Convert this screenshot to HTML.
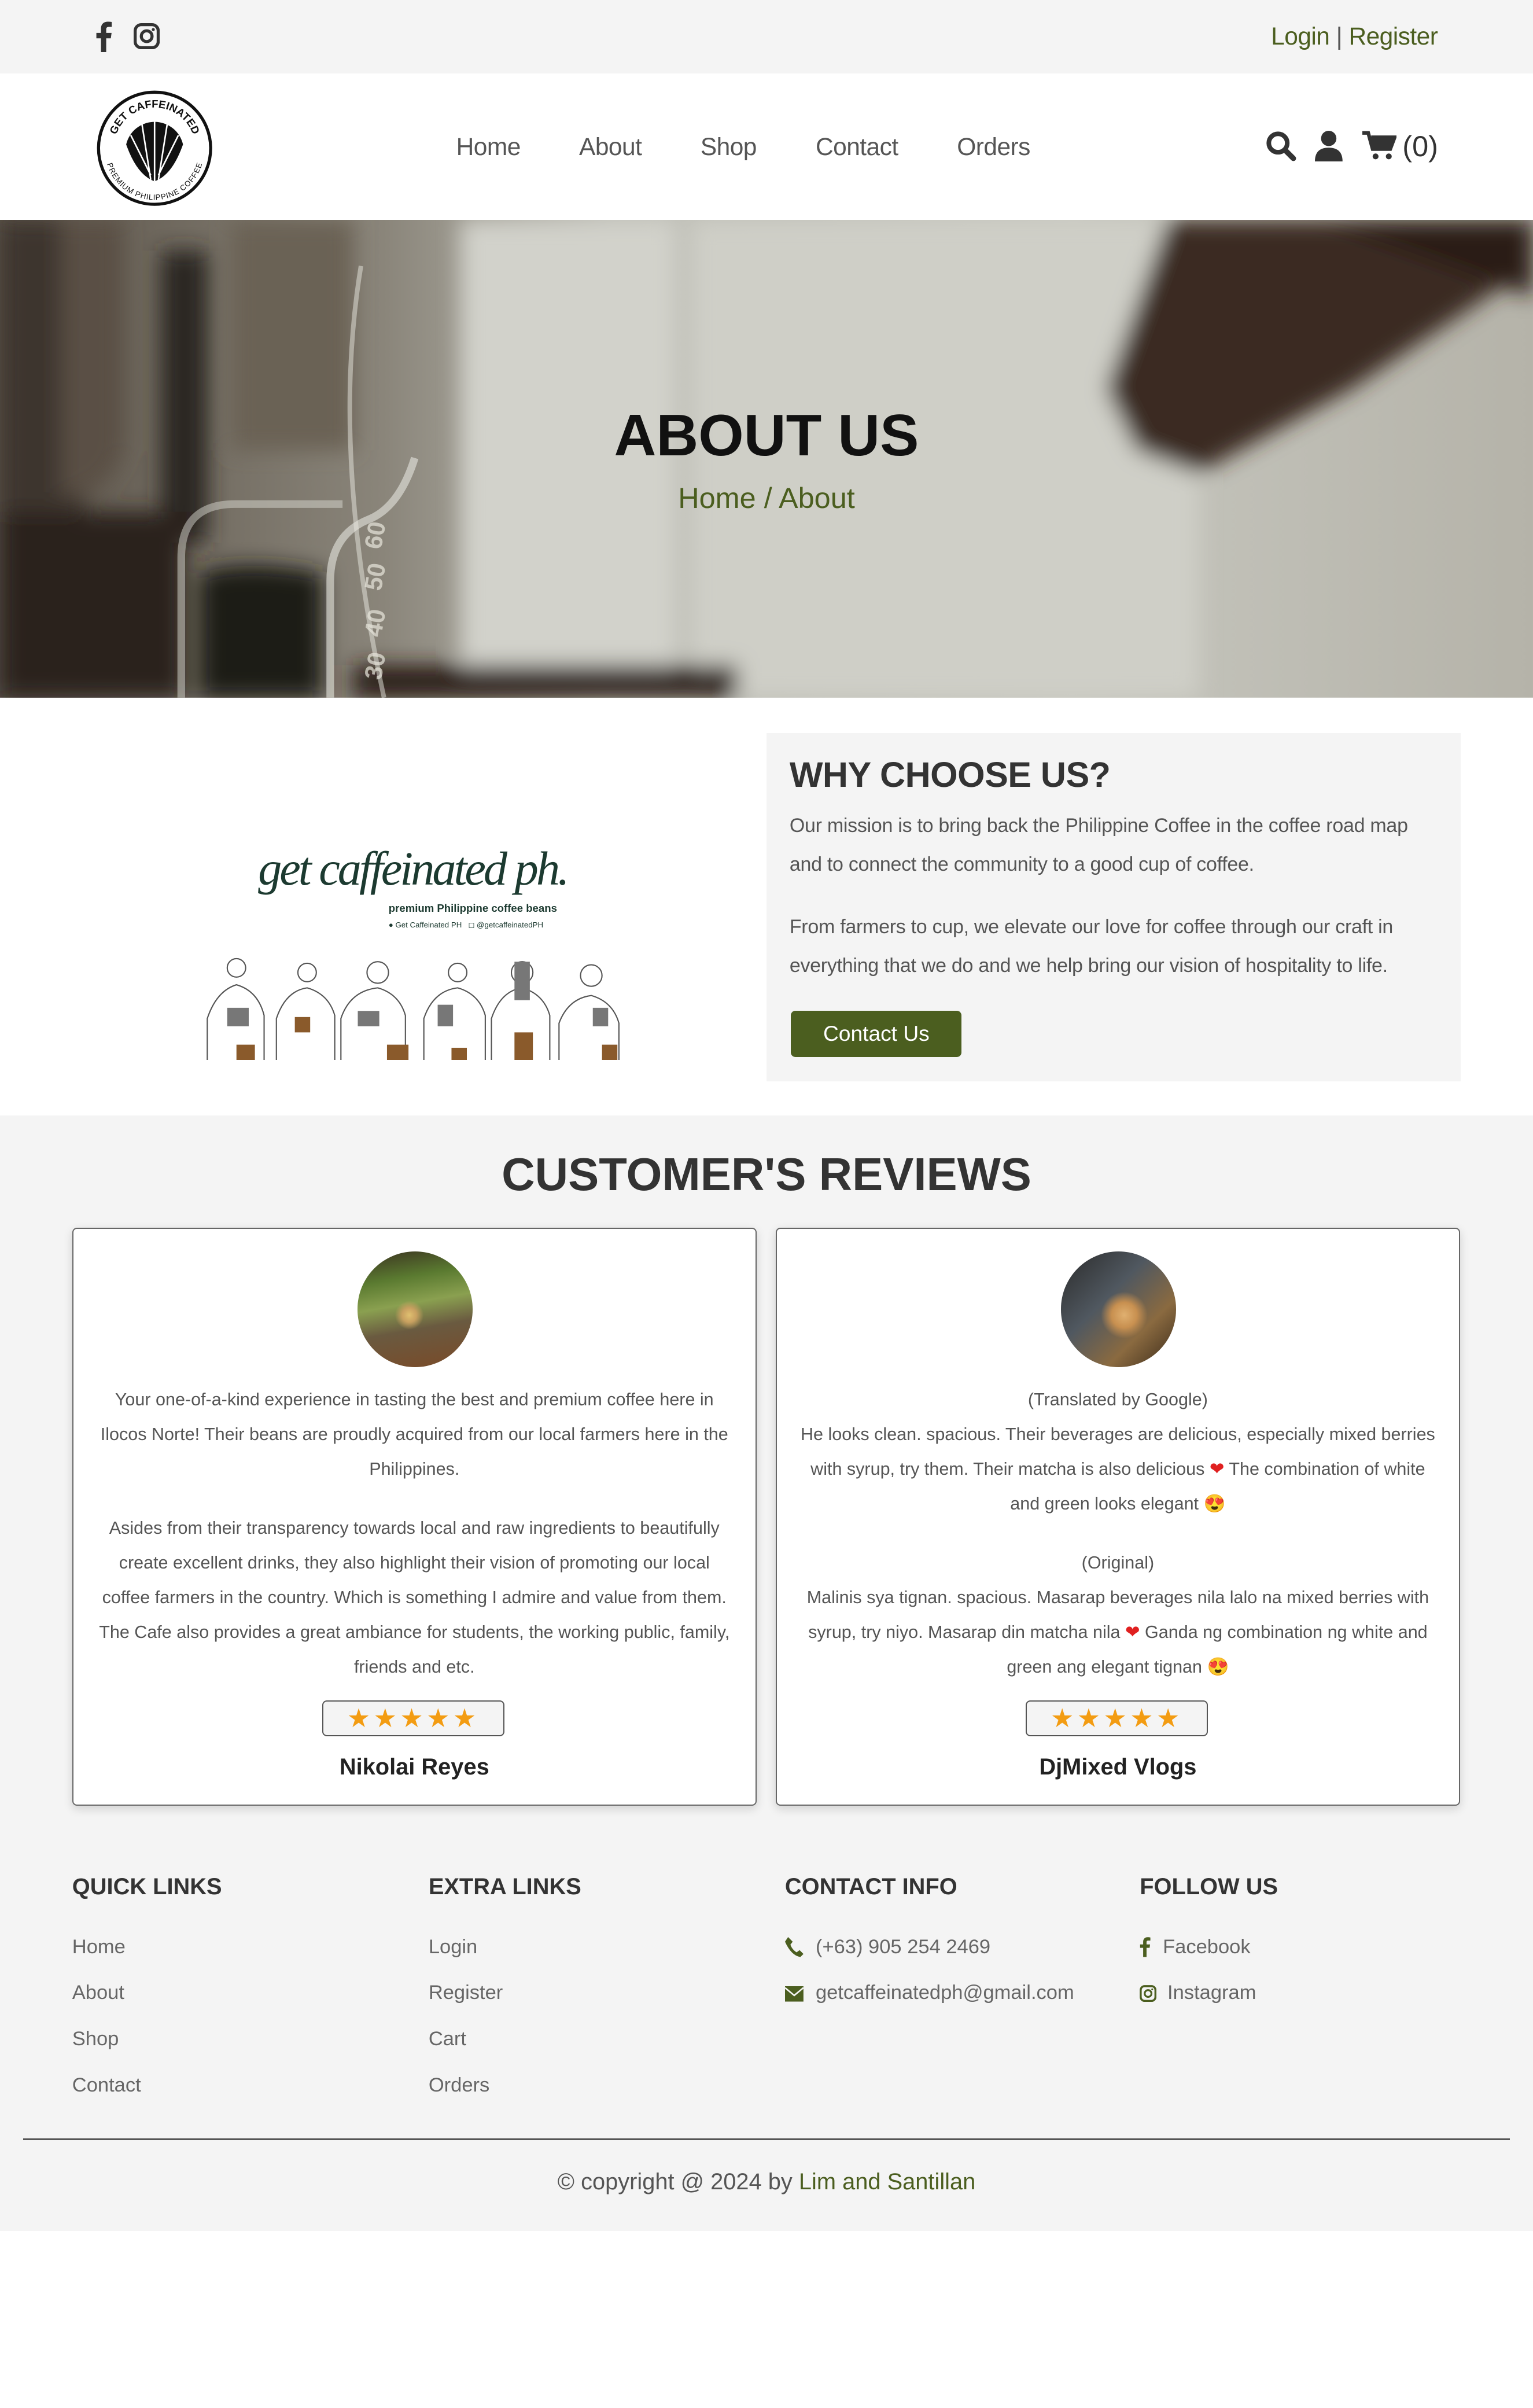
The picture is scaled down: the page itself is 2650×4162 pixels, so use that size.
<!DOCTYPE html>
<html><head><meta charset="utf-8"><style>
html,body{margin:0;padding:0}
body{width:998px;height:1567.5px;zoom:2.65531;position:relative;overflow:hidden;font-family:"Liberation Sans",Arial,sans-serif;background:#fff;color:#555}
.a{position:absolute}
.g{color:#4b5e1f}
.nav a{position:absolute;top:87px;font-size:16px;color:#555;text-decoration:none;letter-spacing:-.2px}
.card{position:absolute;top:799px;width:444px;height:375px;background:#fff;border:1px solid #666;border-radius:3px;box-shadow:0 2px 6px rgba(0,0,0,.15);text-align:center}
.card p{margin:0;font-size:11.5px;line-height:22.6px;color:#555}
.stars{position:absolute;left:162px;top:307px;width:117px;height:22px;border:1px solid #555;border-radius:3px;background:#f4f4f4;color:#f39c12;font-size:17px;line-height:22px;letter-spacing:2px}
.name{position:absolute;left:0;right:0;top:342px;font-size:15px;font-weight:bold;color:#222}
.fh{position:absolute;top:1220px;font-size:15px;font-weight:bold;color:#333}
.fl{position:absolute;font-size:13px;color:#666}
</style></head><body>
<div class="a" style="left:0;top:0;width:998px;height:48px;background:#f4f4f4"></div>
<svg class="a" style="left:62px;top:14px" width="11" height="20" viewBox="0 0 11 20"><path d="M7 20V11h3l.5-3.5H7V5.3c0-1 .3-1.7 1.8-1.7H10.6V.4C10.3.3 9.2.2 8 .2 5.4.2 3.6 1.8 3.6 4.7v2.8H.6V11h3v9z" fill="#333"/></svg>
<svg class="a" style="left:87px;top:15px" width="17" height="17" viewBox="0 0 17 17"><rect x="1" y="1" width="15" height="15" rx="4" fill="none" stroke="#333" stroke-width="2"/><circle cx="8.5" cy="8.5" r="3.5" fill="none" stroke="#333" stroke-width="2"/><circle cx="12.8" cy="4.2" r="1" fill="#333"/></svg>
<div class="a g" style="right:62px;top:15px;font-size:16px;letter-spacing:-.2px">Login <span style="color:#555">|</span> Register</div>
<svg class="a" style="left:62px;top:58px" width="77" height="77" viewBox="0 0 77 77"><defs><path id="ta" d="M12 38.5A26.5 26.5 0 0 1 65 38.5"/><path id="tb" d="M10 40A28.5 28.5 0 0 0 67 40"/></defs><circle cx="38.5" cy="38.5" r="36.5" fill="#fff" stroke="#111" stroke-width="2"/><path d="M20 36 A19 19 0 0 1 57 36 Q50 56 38.5 60 Q27 56 20 36z" fill="#111"/><path d="M38.5 18v42M30 21l6 38M47 21l-6 38M23 30l13 26M54 30l-13 26" stroke="#fff" stroke-width="1"/><text font-size="7" font-weight="bold" fill="#111" font-family="Liberation Sans"><textPath href="#ta" startOffset="50%" text-anchor="middle">GET CAFFEINATED</textPath></text><text font-size="5" fill="#111" font-family="Liberation Sans"><textPath href="#tb" startOffset="50%" text-anchor="middle" dominant-baseline="hanging">PREMIUM PHILIPPINE COFFEE</textPath></text></svg>
<div class="nav"><a style="left:297px">Home</a><a style="left:377px">About</a><a style="left:456px">Shop</a><a style="left:531px">Contact</a><a style="left:623px">Orders</a></div>
<svg class="a" style="left:824px;top:85px" width="20" height="20" viewBox="0 0 20 20"><circle cx="8" cy="8" r="6" fill="none" stroke="#333" stroke-width="3"/><path d="M12.5 12.5L18 18" stroke="#333" stroke-width="3.5" stroke-linecap="round"/></svg>
<svg class="a" style="left:856px;top:85px" width="18" height="20" viewBox="0 0 18 20"><circle cx="9" cy="5" r="5" fill="#333"/><path d="M0 20c0-6 3-9 9-9s9 3 9 9z" fill="#333"/></svg>
<svg class="a" style="left:887px;top:85px" width="22" height="20" viewBox="0 0 23 20"><path d="M0 1h4l3 11h12l3-8H6" fill="none" stroke="#333" stroke-width="2.5"/><path d="M6 4h16l-3 8H8z" fill="#333"/><circle cx="9" cy="17" r="2" fill="#333"/><circle cx="18" cy="17" r="2" fill="#333"/></svg>
<div class="a" style="left:913px;top:84px;font-size:19px;color:#333">(0)</div>
<svg class="a" style="left:0;top:143px" width="998" height="311" viewBox="0 0 998 311" preserveAspectRatio="none">
<defs><filter id="b"><feGaussianBlur stdDeviation="7"/></filter><linearGradient id="bg" x1="0" x2="1"><stop offset="0" stop-color="#5a5248"/><stop offset=".25" stop-color="#8a857a"/><stop offset=".4" stop-color="#bdbdb5"/><stop offset=".7" stop-color="#c6c6be"/><stop offset="1" stop-color="#b5b3a9"/></linearGradient></defs>
<rect width="998" height="311" fill="url(#bg)"/>
<g filter="url(#b)">
<rect x="0" y="0" width="55" height="311" fill="#3e362d"/>
<path d="M40 0h40v150q-10 30-40 30z" fill="#5a5044"/>
<rect x="105" y="20" width="30" height="190" fill="#2c2620"/>
<path d="M150 0h80v150h-80z" fill="#6a6254"/>
<path d="M0 190h120v121H0z" fill="#2a241e"/>
<path d="M130 230q30-10 80 0v81h-80z" fill="#1f1a16"/>
<path d="M300 0h140v311H300z" fill="#d2d2cb"/>
<path d="M450 0h330v311H450z" fill="#cfcfc7"/>
<path d="M790 0h208v30L880 110 780 165 740 150 720 110 760 0z" fill="#3a2c22"/>
<path d="M860 0h138v50z" fill="#2a1f18"/>
<path d="M230 290h250v21H230z" fill="#2a1e16"/>
</g>
<path d="M215 311V235q0-30 25-40 20-8 30-40" fill="none" stroke="#e6e6e0" stroke-width="5" opacity=".6"/>
<path d="M118 311V220q0-35 35-35h70" fill="none" stroke="#d8d8d0" stroke-width="5" opacity=".5"/>
<path d="M235 30q-20 120 15 281" fill="none" stroke="#e8e8e0" stroke-width="3" opacity=".5"/>
<g fill="#e8e6dc" opacity=".7" font-size="16" font-family="Liberation Sans" font-weight="bold"><text x="248" y="215" transform="rotate(-80 248 215)">60</text><text x="248" y="242" transform="rotate(-80 248 242)">50</text><text x="248" y="272" transform="rotate(-80 248 272)">40</text><text x="248" y="300" transform="rotate(-80 248 300)">30</text></g>
</svg>
<div class="a" style="left:0;width:998px;top:262px;text-align:center;font-size:38px;font-weight:bold;color:#111">ABOUT US</div>
<div class="a g" style="left:0;width:998px;top:313px;text-align:center;font-size:19px">Home / About</div>
<div class="a" style="left:168px;top:548px;font-family:'Liberation Serif',serif;font-style:italic;font-size:31px;color:#1c3a30;letter-spacing:-1.5px">get caffeinated ph.</div>
<div class="a" style="left:253px;top:587px;font-size:7px;font-weight:bold;color:#1c3a30">premium Philippine coffee beans</div>
<div class="a" style="left:253px;top:599px;font-size:5px;color:#1c3a30">● Get Caffeinated PH &nbsp; ◻ @getcaffeinatedPH</div>
<svg class="a" style="left:130px;top:618px" width="290" height="72" viewBox="0 0 290 72">
<g fill="none" stroke="#555" stroke-width=".8">
<circle cx="24" cy="12" r="6"/><path d="M5 72V45q6-18 19-22q14 4 18 20v29"/>
<circle cx="70" cy="15" r="6"/><path d="M50 72V45q6-18 20-20q14 4 18 18v29"/>
<circle cx="116" cy="15" r="7"/><path d="M92 72V45q6-18 24-20q14 4 18 18v29"/>
<circle cx="168" cy="15" r="6"/><path d="M146 72V45q6-18 22-20q14 4 18 18v29"/>
<circle cx="210" cy="15" r="7"/><path d="M190 72V45q6-18 20-20q14 4 18 18v29"/>
<circle cx="255" cy="17" r="7"/><path d="M234 72V48q6-16 21-18q14 4 18 18v24"/>
</g>
<g fill="#8a5a2b"><rect x="24" y="62" width="12" height="10"/><rect x="62" y="44" width="10" height="10"/><rect x="122" y="62" width="14" height="10"/><rect x="164" y="64" width="10" height="8"/><rect x="205" y="54" width="12" height="18"/><rect x="262" y="62" width="10" height="10"/></g>
<g fill="#777"><path d="M18 38h14v12H18z"/><path d="M103 40h14v10h-14z"/><path d="M155 36h10v14h-10z"/><path d="M256 38h10v12h-10z"/><path d="M205 8h10v25h-10z"/></g>
</svg>
<div class="a" style="left:499px;top:477px;width:452px;height:227px;background:#f4f4f4"></div>
<div class="a" style="left:514px;top:491px;font-size:23px;font-weight:bold;color:#333;letter-spacing:-.2px">WHY CHOOSE US?</div>
<div class="a" style="left:514px;top:525px;width:425px;font-size:12.8px;line-height:25.3px;color:#555;letter-spacing:-.1px">Our mission is to bring back the Philippine Coffee in the coffee road map and to connect the community to a good cup of coffee.</div>
<div class="a" style="left:514px;top:591px;width:425px;font-size:12.8px;line-height:25.3px;color:#555;letter-spacing:-.1px">From farmers to cup, we elevate our love for coffee through our craft in everything that we do and we help bring our vision of hospitality to life.</div>
<div class="a" style="left:515px;top:658px;width:111px;height:30px;background:#4b5e1f;border-radius:3px;color:#fff;font-size:14px;line-height:30px;text-align:center">Contact Us</div>
<div class="a" style="left:0;top:726px;width:998px;height:726px;background:#f4f4f4"></div>
<div class="a" style="left:0;width:998px;top:747px;text-align:center;font-size:30px;font-weight:bold;color:#333">CUSTOMER'S REVIEWS</div>
<div class="card" style="left:47px">
<div class="a" style="left:185px;top:15px;width:75px;height:75px;border-radius:50%;background:radial-gradient(circle at 45% 55%,#e0c070 0,#c8a060 8%,transparent 16%),linear-gradient(170deg,#3a3020 0,#5a7a30 25%,#8aa050 45%,#6a5a40 65%,#7a4a28 100%)"></div>
<div class="a" style="left:13px;right:13px;top:100px"><p>Your one-of-a-kind experience in tasting the best and premium coffee here in Ilocos Norte! Their beans are proudly acquired from our local farmers here in the Philippines.</p><p>&nbsp;</p><p style="margin-top:-7px">Asides from their transparency towards local and raw ingredients to beautifully create excellent drinks, they also highlight their vision of promoting our local coffee farmers in the country. Which is something I admire and value from them. The Cafe also provides a great ambiance for students, the working public, family, friends and etc.</p></div>
<div class="stars">★★★★★</div><div class="name">Nikolai Reyes</div>
</div>
<div class="card" style="left:505px">
<div class="a" style="left:185px;top:15px;width:75px;height:75px;border-radius:50%;background:radial-gradient(circle at 55% 55%,#e0b070 0,#c89050 14%,transparent 26%),linear-gradient(135deg,#2a2a2a 0,#505860 40%,#8a6a40 70%,#3a2a1a 100%)"></div>
<div class="a" style="left:15px;right:15px;top:100px"><p>(Translated by Google)</p><p>He looks clean. spacious. Their beverages are delicious, especially mixed berries with syrup, try them. Their matcha is also delicious <span style="color:#e02020">❤</span> The combination of white and green looks elegant <span style="color:#e03050">😍</span></p><p>&nbsp;</p><p style="margin-top:-7px">(Original)</p><p>Malinis sya tignan. spacious. Masarap beverages nila lalo na mixed berries with syrup, try niyo. Masarap din matcha nila <span style="color:#e02020">❤</span> Ganda ng combination ng white and green ang elegant tignan <span style="color:#e03050">😍</span></p></div>
<div class="stars">★★★★★</div><div class="name">DjMixed Vlogs</div>
</div>
<div class="fh" style="left:47px">QUICK LINKS</div><div class="fh" style="left:279px">EXTRA LINKS</div><div class="fh" style="left:511px">CONTACT INFO</div><div class="fh" style="left:742px">FOLLOW US</div>
<div class="fl" style="left:47px;top:1260px">Home</div><div class="fl" style="left:47px;top:1290px">About</div><div class="fl" style="left:47px;top:1320px">Shop</div><div class="fl" style="left:47px;top:1350px">Contact</div>
<div class="fl" style="left:279px;top:1260px">Login</div><div class="fl" style="left:279px;top:1290px">Register</div><div class="fl" style="left:279px;top:1320px">Cart</div><div class="fl" style="left:279px;top:1350px">Orders</div>
<svg class="a" style="left:511px;top:1261px" width="12" height="13" viewBox="0 0 12 13"><path d="M2 0l3 3-1.5 2q1 3 4 5L9.5 8.5l2.5 2.5-2 2Q4 12 0 3z" fill="#4b5e1f"/></svg>
<div class="fl" style="left:531px;top:1260px">(+63) 905 254 2469</div>
<svg class="a" style="left:511px;top:1293px" width="12" height="10" viewBox="0 0 12 10"><rect width="12" height="10" fill="#4b5e1f"/><path d="M0 1l6 5 6-5" fill="none" stroke="#f4f4f4" stroke-width="1"/></svg>
<div class="fl" style="left:531px;top:1290px">getcaffeinatedph@gmail.com</div>
<svg class="a" style="left:742px;top:1261px" width="7" height="13" viewBox="0 0 7 13"><path d="M4.5 13V7h2l.3-2.2H4.5V3.4c0-.6.2-1.1 1.1-1.1H7V.3C6.7.2 6 .1 5.2.1 3.5.1 2.3 1.2 2.3 3.1v1.7H.3V7h2v6z" fill="#4b5e1f"/></svg>
<div class="fl" style="left:757px;top:1260px">Facebook</div>
<svg class="a" style="left:742px;top:1292px" width="11" height="11" viewBox="0 0 11 11"><rect x=".7" y=".7" width="9.6" height="9.6" rx="2.5" fill="none" stroke="#4b5e1f" stroke-width="1.3"/><circle cx="5.5" cy="5.5" r="2.2" fill="none" stroke="#4b5e1f" stroke-width="1.2"/><circle cx="8.2" cy="2.8" r=".6" fill="#4b5e1f"/></svg>
<div class="fl" style="left:760px;top:1290px">Instagram</div>
<div class="a" style="left:15px;top:1392px;width:968px;height:1px;background:#555"></div>
<div class="a" style="left:0;width:998px;top:1412px;text-align:center;font-size:15px;color:#555">© copyright @ 2024 by <span class="g">Lim and Santillan</span></div>
</body></html>
